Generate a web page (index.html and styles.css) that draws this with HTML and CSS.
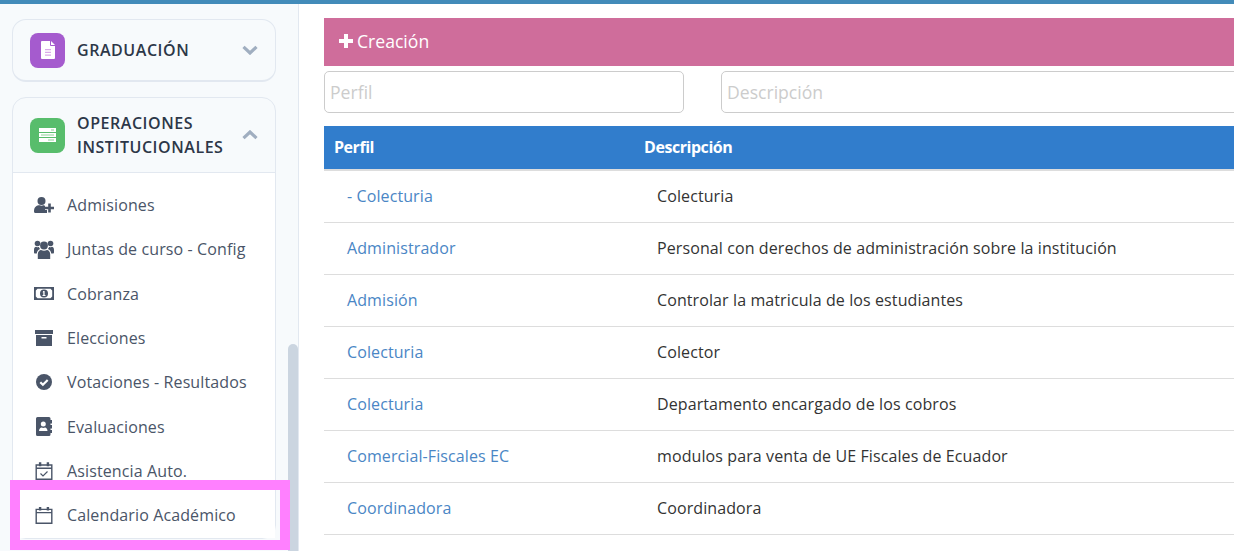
FILE: index.html
```html
<!DOCTYPE html>
<html lang="es">
<head>
  <meta charset="UTF-8" />
  <meta name="viewport" content="width=device-width, initial-scale=1.0"/>
  <title>Perfiles</title>
  <link rel="stylesheet" href="styles.css">
</head>
<body>

<div class="topbar"></div>

<div class="layout">
  <aside class="sidebar">
    <div class="menu-card">
      <div class="menu-head">
        <span class="menu-badge badge-purple">
          <svg width="14" height="18" viewBox="0 0 14 18"><path fill="#fff" d="M0 1a1 1 0 0 1 1-1h8v4a1 1 0 0 0 1 1h4v12a1 1 0 0 1-1 1H1a1 1 0 0 1-1-1z"/><path fill="#fff" d="M10 0l4 4h-4z"/><path fill="#d9a9e8" d="M4 8h6v1.3H4zM4 10.7h6V12H4zM4 13.4h6v1.3H4z"/></svg>
        </span>
        <span class="menu-title">GRADUACIÓN</span>
        <svg class="chevron" width="16" height="10" viewBox="0 0 16 10"><path fill="none" stroke="#a0aec0" stroke-width="3.2" d="M1.500 1.800L8 8l6.500-6.200"/></svg>
      </div>
    </div>

    <div class="menu-card menu-open">
      <div class="menu-head head-open">
        <span class="menu-badge badge-green">
          <svg width="17" height="14" viewBox="0 0 17 14"><path fill="#fff" d="M0 0h17v4H0zM0 5h17v4H0zM0 10h17v4H0z"/><path fill="#8fd19a" d="M12 1.400h3v1.200h-3zM2 6.400h13v1.200H2zM9 11.400h6v1.200H9z"/></svg>
        </span>
        <span class="menu-title">OPERACIONES INSTITUCIONALES</span>
        <svg class="chevron" width="16" height="10" viewBox="0 0 16 10"><path fill="none" stroke="#a0aec0" stroke-width="3.2" d="M1.500 8.200L8 2l6.500 6.200"/></svg>
      </div>
      <ul class="menu-list">
        <li>
          <svg class="item-icon" width="20" height="16" viewBox="0 0 20 16"><circle cx="7.500" cy="4" r="4"/><path d="M0 14.500C0 16 1 16 1.500 16h11.500v-3h-2V8.800C10 8.400 9.500 8.300 9.300 8.300c-1.200.6-2.400.6-3.600 0C2.500 8.300 0 10 0 14.500z"/><path d="M14.200 6.500h2.600v3.200H20v2.600h-3.200v3.200h-2.600v-3.200H11V9.700h3.200z"/></svg>
          Admisiones
        </li>
        <li>
          <svg class="item-icon" width="20" height="19" viewBox="0 0 20 19"><circle cx="10" cy="5.500" r="3.900"/><circle cx="3.500" cy="3.500" r="2.800"/><circle cx="16.500" cy="3.500" r="2.800"/><path d="M3.800 19v-4.800C3.800 11.500 5.500 9.900 7 9.900c1.800 1.100 4.200 1.100 6 0 1.500 0 3.200 1.600 3.200 4.300V19z"/><path d="M0 10c0-2.200 1-3.300 2.200-3.300.9.600 1.800.7 2.700.4.200.8.600 1.400 1.200 2C4 10 3 11.500 2.800 13.500H1c-.6 0-1-.5-1-1z"/><path d="M20 10c0-2.200-1-3.300-2.200-3.300-.9.600-1.800.7-2.700.4-.2.800-.6 1.400-1.200 2 2.100.9 3.100 2.400 3.300 4.400H19c.6 0 1-.5 1-1z"/></svg>
          Juntas de curso - Config
        </li>
        <li>
          <svg class="item-icon" width="20" height="13" viewBox="0 0 20 13"><path fill-rule="evenodd" d="M0 0h20v13H0zM3.500 1.800L1.800 3.500v6l1.700 1.700h13l1.700-1.700v-6l-1.700-1.700z"/><circle cx="10" cy="6.500" r="4"/><path fill="#fff" d="M9.200 3.900h1.400v4.200h.9v1H8.500v-1h.8V5.300l-.7.300z"/></svg>
          Cobranza
        </li>
        <li>
          <svg class="item-icon" width="18" height="16" viewBox="0 0 18 16"><path d="M0 0h18v4H0z"/><path fill-rule="evenodd" d="M1 5h16v11H1zM6.500 7v1.500h5V7z"/></svg>
          Elecciones
        </li>
        <li>
          <svg class="item-icon" width="16" height="16" viewBox="0 0 16 16"><circle cx="8" cy="8" r="8"/><path fill="none" stroke="#fff" stroke-width="2.200" d="M4.300 8.200l2.600 2.600 4.800-4.800"/></svg>
          Votaciones - Resultados
        </li>
        <li>
          <svg class="item-icon" width="16" height="19" viewBox="0 0 16 19"><path d="M1.500 0h11.500A1.500 1.500 0 0 1 14.500 1.500V3H16v3.500h-1.500V8H16v3.500h-1.500V13H16v3h-1.500v1.500A1.500 1.500 0 0 1 13 19H1.500A1.500 1.500 0 0 1 0 17.500v-16A1.500 1.500 0 0 1 1.500 0z"/><circle cx="7.300" cy="7" r="2.500" fill="#fff"/><path fill="#fff" d="M3 14c0-2.300 1.500-3.500 2.500-3.500 1.200.6 2.400.6 3.600 0 1 0 2.400 1.200 2.400 3.500z"/></svg>
          Evaluaciones
        </li>
        <li>
          <svg class="item-icon" width="17" height="18" viewBox="0 0 17 18"><path fill="none" stroke="#4a5568" stroke-width="1.400" d="M.7 3h15.600v14.300H.7zM.7 6.300h15.600"/><path d="M3.400 .3h2.400v3.900H3.400zM11.200 .3h2.400v3.900h-2.400z"/><path fill="none" stroke="#4a5568" stroke-width="1.200" d="M5 11.500l2.500 2.500 4.500-4.500"/></svg>
          Asistencia Auto.
        </li>
        <li>
          <svg class="item-icon" width="17" height="17" viewBox="0 0 17 17"><path fill="none" stroke="#4a5568" stroke-width="1.400" d="M.7 2.400h15.600v13.900H.7zM.7 5.600h15.600"/><path d="M3.400 0h2.400v3.600H3.400zM11.200 0h2.400v3.600h-2.400z"/></svg>
          Calendario Académico
        </li>
      </ul>
    </div>

    <div class="scroll-thumb"></div>
    <div class="highlight"></div>
  </aside>

  <main class="content">
    <div class="create-bar">
      <svg width="14" height="14" viewBox="0 0 14 14"><path fill="#fff" d="M5 0h4v5h5v4H9v5H5V9H0V5h5z"/></svg>
      Creación
    </div>

    <div class="filters">
      <input class="filter-input filter-perfil" type="text" placeholder="Perfil">
      <input class="filter-input filter-desc" type="text" placeholder="Descripción">
    </div>

    <table class="profiles">
      <thead>
        <tr><th class="col-perfil">Perfil</th><th>Descripción</th></tr>
      </thead>
      <tbody>
        <tr><td><a href="#">- Colecturia</a></td><td>Colecturia</td></tr>
        <tr><td><a href="#">Administrador</a></td><td>Personal con derechos de administración sobre la institución</td></tr>
        <tr><td><a href="#">Admisión</a></td><td>Controlar la matricula de los estudiantes</td></tr>
        <tr><td><a href="#">Colecturia</a></td><td>Colector</td></tr>
        <tr><td><a href="#">Colecturia</a></td><td>Departamento encargado de los cobros</td></tr>
        <tr><td><a href="#">Comercial-Fiscales EC</a></td><td>modulos para venta de UE Fiscales de Ecuador</td></tr>
        <tr><td><a href="#">Coordinadora</a></td><td>Coordinadora</td></tr>
      </tbody>
    </table>
  </main>
</div>

</body>
</html>
```

FILE: styles.css
```css
html, body {
  margin: 0;
  height: 551px;
  overflow: hidden;
}

body {
  font-family: "Open Sans", sans-serif;
  font-size: 16px;
  color: #333;
  background: #fff;
}

.topbar {
  height: 4px;
  background: #428bb9;
}

.layout {
  display: flex;
  height: 547px;
}

.sidebar {
  position: relative;
  box-sizing: border-box;
  flex: 0 0 299px;
  padding: 15px 22px 0 12px;
  background: #f7fafc;
  border-right: 1px solid #e2e8f0;
  overflow: hidden;
}

.menu-card {
  background: #f7fafc;
  border: 1px solid #e2e8f0;
  border-bottom-width: 2px;
  border-radius: 14px;
  margin-bottom: 15px;
}

.menu-open {
  border-bottom-width: 1px;
  margin-bottom: 0;
}

.menu-head {
  display: flex;
  align-items: center;
  height: 60px;
  padding: 0 17px;
}

.head-open {
  height: 74px;
  border-bottom: 1px solid #e2e8f0;
}

.menu-badge {
  flex: 0 0 35px;
  height: 35px;
  border-radius: 8px;
  display: flex;
  align-items: center;
  justify-content: center;
}

.badge-purple {
  background: #a55bce;
}

.badge-green {
  background: #58bd6c;
}

.menu-title {
  flex: 1;
  margin-left: 12px;
  font-size: 16px;
  font-weight: 600;
  line-height: 24px;
  letter-spacing: 0.55px;
  color: #2d3748;
}

.chevron {
  flex: none;
}

.menu-list {
  list-style: none;
  margin: 0;
  padding: 10px 0 0;
  background: #fff;
}

.menu-list li {
  display: flex;
  align-items: center;
  height: 44.33px;
  padding-left: 20px;
  font-size: 16px;
  letter-spacing: 0.12px;
  color: #4a5568;
}

.item-icon {
  flex: none;
  fill: #4a5568;
  margin-right: 12px;
  width: 22px;
}

.scroll-thumb {
  position: absolute;
  right: 0;
  top: 340px;
  bottom: 0;
  width: 10px;
  background: #cbd5e0;
  border-radius: 5px 5px 0 0;
}

.highlight {
  position: absolute;
  left: 10px;
  top: 476px;
  width: 260px;
  height: 50px;
  border: 10px solid #ff80ff;
}

.content {
  flex: 1;
  min-width: 0;
  padding: 14px 0 0 25px;
  overflow: hidden;
}

.create-bar {
  display: flex;
  align-items: center;
  gap: 4px;
  height: 46px;
  padding: 0 0 2px 15px;
  font-size: 17.6px;
  color: #fff;
  background: #cf6d9b;
}

.filters {
  display: flex;
  gap: 37px;
  margin-top: 5px;
}

.filter-input {
  box-sizing: border-box;
  height: 42px;
  padding: 0 5px;
  font-family: inherit;
  font-size: 17.6px;
  border: 1px solid #ccc;
  border-radius: 5px;
  background: #fff;
}

.filter-input::placeholder {
  color: #ccc;
}

.filter-perfil {
  flex: 0 0 360px;
}

.filter-desc {
  flex: 0 0 560px;
}

.profiles {
  width: 100%;
  margin-top: 13px;
  border-collapse: collapse;
  table-layout: fixed;
}

.profiles th {
  height: 41px;
  padding: 0 10px 2px;
  text-align: left;
  font-size: 16px;
  font-weight: 700;
  letter-spacing: -0.45px;
  color: #fff;
  background: #317dcc;
  border-bottom: 2px solid #ddd;
}

.col-perfil {
  width: 290px;
}

.profiles td {
  height: 49px;
  padding: 0 23px 2px;
  letter-spacing: 0.1px;
  border-bottom: 1px solid #ddd;
  color: #333;
}

.profiles a {
  color: #4a86c5;
  text-decoration: none;
}
```
